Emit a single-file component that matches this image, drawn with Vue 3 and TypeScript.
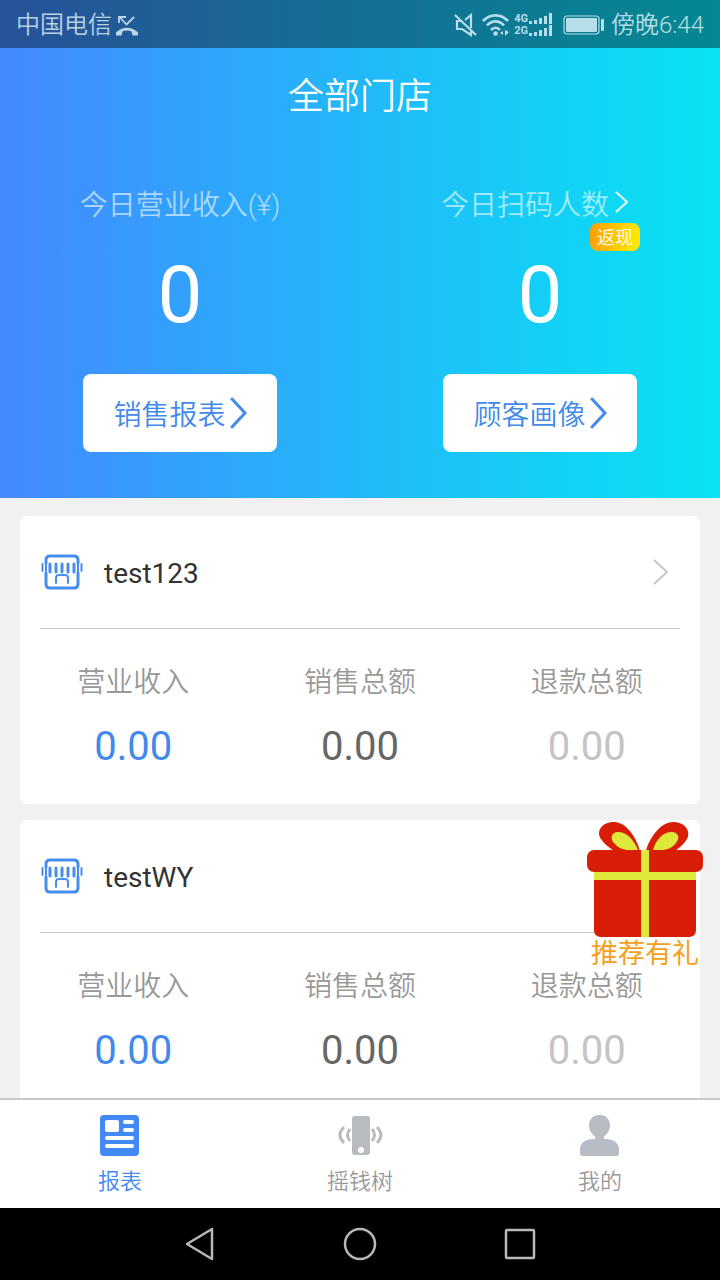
<script setup lang="ts">
interface Store {
  name: string
  income: string
  sales: string
  refund: string
}

const stores: Store[] = [
  { name: 'test123', income: '0.00', sales: '0.00', refund: '0.00' },
  { name: 'testWY', income: '0.00', sales: '0.00', refund: '0.00' },
]
</script>

<template>
  <div class="screen">
    <header class="hero">
      <div class="status">
        <div class="status-group">
          <span>中国电信</span>
          <svg class="missed" width="24" height="24" viewBox="0 0 24 24" aria-hidden="true">
            <path d="M4 10V4h7M5 4.500l6.500 7L19 4" fill="none" stroke="currentColor" stroke-width="1.800" />
            <path d="M1 19.500c6-6.500 16-6.500 22 0v3h-5.500l-1-4c-2.500-1.200-6.500-1.200-9 0l-1 4H1z" fill="currentColor" />
          </svg>
        </div>
        <div class="status-group right">
          <svg width="24" height="24" viewBox="0 0 24 24" aria-hidden="true">
            <path d="M8 8H3v8h5l9 6v-4M11 7l6-5v13M1 2l21 20" fill="none" stroke="currentColor" stroke-width="2.200" />
          </svg>
          <svg class="wifi" width="28" height="24" viewBox="0 0 28 24" aria-hidden="true">
            <path d="M1 8C8 .500 19 .500 26 8M5 12.500c5-5.500 12-5.500 17 0M9 17c2.800-3 6.500-3 9 0" fill="none" stroke="currentColor" stroke-width="2.600" />
            <circle cx="13.500" cy="20.500" r="2.300" fill="currentColor" />
            <path d="M23 17v6l4-4zM21 18v4l-3-2z" fill="currentColor" />
          </svg>
          <span class="net"><span>4G</span><span>2G</span></span>
          <svg class="bars" width="24" height="24" viewBox="0 0 24 24" aria-hidden="true">
            <path
              d="M0 8h3v3H0zM5 7h3v4H5zM10 5h3v6h-3zM15 3h3v8h-3zM20 0h3v11h-3zM0 20h3v3H0zM5 19h3v4H5zM10 17h3v6h-3zM15 15h3v8h-3zM20 12h3v11h-3z"
              fill="currentColor"
            />
          </svg>
          <svg class="battery" width="42" height="20" viewBox="0 0 42 20" aria-hidden="true">
            <rect x="1" y="1" width="35" height="18" rx="3" fill="none" stroke="currentColor" stroke-width="1.200" />
            <rect x="3" y="3" width="31" height="14" rx="1" fill="currentColor" />
            <rect x="38" y="4" width="3" height="12" rx="1" fill="currentColor" />
          </svg>
          <span>傍晚6:44</span>
        </div>
      </div>

      <h1 class="title">全部门店</h1>

      <div class="summary">
        <section class="stat">
          <div class="stat-label"><span class="label-text">今日营业收入(¥)</span></div>
          <strong class="stat-value">0</strong>
          <button type="button" class="action">
            <span class="action-text">销售报表</span>
            <svg width="17" height="32" viewBox="0 0 17 32" aria-hidden="true">
              <path d="M2 2l13 14L2 30" />
            </svg>
          </button>
        </section>
        <section class="stat">
          <a href="#" class="stat-label link">
            <span class="label-text">今日扫码人数</span>
            <svg width="14" height="22" viewBox="0 0 14 22" aria-hidden="true">
              <path d="M1 1l11 10L1 21" />
            </svg>
            <span class="badge">返现</span>
          </a>
          <strong class="stat-value">0</strong>
          <button type="button" class="action">
            <span class="action-text">顾客画像</span>
            <svg width="17" height="32" viewBox="0 0 17 32" aria-hidden="true">
              <path d="M2 2l13 14L2 30" />
            </svg>
          </button>
        </section>
      </div>
    </header>

    <main class="stores">
      <article v-for="store in stores" :key="store.name" class="card">
        <button type="button" class="card-head">
          <svg class="shop" width="42" height="36" viewBox="0 0 42 36" aria-hidden="true">
            <path d="M5 9V6q0-4 4-4h24q4 0 4 4v3M5 19v11q0 4 4 4h24q4 0 4-4V19" stroke-width="3" />
            <path d="M1.500 10v7M40.500 10v7M5 9v10M37 9v10" stroke-width="2" />
            <path d="M9 10v8M15 10v8M21 10v8M27 10v8M33 10v8" stroke-width="3" />
            <path d="M15 29v-5q0-3 3-3h6q3 0 3 3v5" stroke-width="2" />
          </svg>
          <span class="name">{{ store.name }}</span>
          <svg class="arrow" width="16" height="26" viewBox="0 0 16 26" aria-hidden="true">
            <path d="M1 1l13 12L1 25" />
          </svg>
        </button>
        <dl class="metrics">
          <div class="metric">
            <dt>营业收入</dt>
            <dd class="income">{{ store.income }}</dd>
          </div>
          <div class="metric">
            <dt>销售总额</dt>
            <dd>{{ store.sales }}</dd>
          </div>
          <div class="metric">
            <dt>退款总额</dt>
            <dd class="refund">{{ store.refund }}</dd>
          </div>
        </dl>
      </article>

      <a href="#" class="gift">
        <svg width="116" height="116" viewBox="0 0 116 116" aria-hidden="true">
          <path d="M53 29C50 17 40 0 27 0 14 0 9 10 14 17c3 5 8 8 13 12z" fill="#d81e06" />
          <path d="M59 29C62 17 73 0 86 0c13 0 18 10 14 17-3 5-7 8-12 12z" fill="#d81e06" />
          <path d="M51 28C47 18 40 10 31 10c-7 0-8 7-4 11 4 5 10 7 14 7z" fill="#dde83a" />
          <path d="M66 28C68 20 75 10 84 10c8 0 9 6 5 11-4 5-9 7-14 7z" fill="#dde83a" />
          <rect x="0" y="28" width="116" height="22" rx="7" fill="#d81e06" />
          <path d="M7 50h102v58q0 7-7 7H14q-7 0-7-7z" fill="#d81e06" />
          <path d="M7 50h102v8H7zM54 28h8v87h-8z" fill="#dde83a" />
        </svg>
        <span class="gift-text">推荐有礼</span>
      </a>
    </main>

    <nav class="tabs">
      <a href="#" class="tab active" aria-current="page">
        <svg width="42" height="42" viewBox="0 0 42 42" aria-hidden="true">
          <rect x="1" y="0" width="39" height="41" rx="4" fill="currentColor" />
          <rect x="6" y="5" width="14" height="12" rx="2" fill="#fff" />
          <path d="M26 7h7M26 15h7M8 23h25M8 31h25" stroke="#fff" stroke-width="4" stroke-linecap="round" />
        </svg>
        <span>报表</span>
      </a>
      <a href="#" class="tab">
        <svg width="46" height="42" viewBox="0 0 46 42" aria-hidden="true">
          <path d="M18 1h12q3 0 3 3v33q0 3-3 3H18q-3 0-3-3V4q0-3 3-3zm6 31a3 3 0 1 0 0 6 3 3 0 0 0 0-6z" fill="#b8bcc1" fill-rule="evenodd" />
          <path d="M7 12q-8 8 0 16M13 14q-5 6 0 12M35 14q5 6 0 12M40 12q8 8 0 16" fill="none" stroke="#b8bcc1" stroke-width="3" />
        </svg>
        <span>摇钱树</span>
      </a>
      <a href="#" class="tab">
        <svg width="42" height="42" viewBox="0 0 42 42" aria-hidden="true">
          <path d="M20.500 0c7 0 10.500 5 10.500 10.500 0 5-3 8.500-6 11-1 2 0 2.500 2 2.500 8 0 13 4 13 11v3q0 3-3 3H4q-3 0-3-3v-3c0-7 5-11 13-11 2 0 3-.500 2-2.500-3-2.500-6-6-6-11C10 5 13.500 0 20.500 0z" fill="#b8bcc3" />
        </svg>
        <span>我的</span>
      </a>
    </nav>

    <div class="system">
      <button type="button" aria-label="返回">
        <svg width="34" height="36" viewBox="0 0 34 36" aria-hidden="true">
          <path d="M29 3v30L4 18z" />
        </svg>
      </button>
      <button type="button" aria-label="主屏幕">
        <svg width="34" height="36" viewBox="0 0 34 36" aria-hidden="true">
          <circle cx="17" cy="18" r="15" />
        </svg>
      </button>
      <button type="button" aria-label="最近任务">
        <svg width="34" height="36" viewBox="0 0 34 36" aria-hidden="true">
          <rect x="3" y="4" width="28" height="28" rx="1" />
        </svg>
      </button>
    </div>
  </div>
</template>

<style>
body {
  margin: 0;
}
</style>

<style scoped>
.screen {
  display: flex;
  flex-direction: column;
  height: 100vh;
  overflow: hidden;
  background: #f1f1f1;
  font-family: Roboto, "Noto Sans CJK SC", sans-serif;
  font-weight: 350;
}

.screen * {
  box-sizing: border-box;
}

svg {
  display: block;
  flex: none;
}

button {
  margin: 0;
  padding: 0;
  border: 0;
  background: none;
  font: inherit;
  cursor: pointer;
}

a {
  color: inherit;
  text-decoration: none;
}

.hero {
  flex: none;
  padding-bottom: 46px;
  background: linear-gradient(90deg, #4488ff 0%, #2da8fa 33%, #18c8f7 67%, #08e3f2 100%);
  color: #fff;
}

.status {
  display: flex;
  align-items: center;
  justify-content: space-between;
  height: 48px;
  padding: 2px 16px 0;
  background: rgba(0, 0, 0, 0.4);
  color: rgba(225, 246, 255, 0.8);
  font-size: 24px;
  line-height: 46px;
}

.status-group {
  display: flex;
  align-items: center;
}

.missed {
  margin-left: 3px;
}

.wifi {
  margin-left: 4px;
}

.net {
  display: flex;
  flex-direction: column;
  margin-left: 4px;
  font-size: 11px;
  font-weight: 700;
  line-height: 12px;
}

.bars {
  margin-left: 1px;
}

.battery {
  margin: 0 6px 0 10px;
}

.title {
  margin: 0;
  padding: 21px 0 19px;
  font-size: 36px;
  font-weight: 350;
  line-height: 56px;
  text-align: center;
}

.summary {
  display: grid;
  grid-template-columns: 1fr 1fr;
  padding-top: 38px;
}

.stat {
  display: flex;
  flex-direction: column;
  align-items: center;
}

.stat-label {
  display: flex;
  align-items: center;
  height: 40px;
  color: rgba(255, 255, 255, 0.6);
  font-size: 28px;
}

.label-text {
  padding-top: 8px;
  line-height: 32px;
}

.link {
  position: relative;
  gap: 6px;
  padding-right: 10px;
}

.link path {
  fill: none;
  stroke: #e4fbff;
  stroke-width: 2;
}

.badge {
  position: absolute;
  top: 41px;
  right: -1px;
  width: 50px;
  padding-top: 2px;
  border-radius: 8px;
  background: linear-gradient(100deg, #ff9c00, #ffe400 85%);
  color: #fff;
  font-size: 18px;
  line-height: 26px;
  text-align: center;
}

.stat-value {
  padding: 23px 0 29px;
  font-size: 80px;
  font-weight: 400;
  line-height: 100px;
}

.action {
  display: flex;
  align-items: center;
  gap: 4px;
  padding: 18px 30px;
  border-radius: 8px;
  background: #fff;
  color: #4289ec;
  font-size: 28px;
}

.action-text {
  padding-top: 6px;
  line-height: 36px;
}

.action path {
  fill: none;
  stroke: currentColor;
  stroke-width: 3;
  stroke-linecap: round;
}

.stores {
  position: relative;
  display: flex;
  flex: 1;
  flex-direction: column;
  gap: 16px;
  min-height: 0;
  padding: 18px 20px 0;
  overflow: hidden;
}

.card {
  flex: none;
  padding: 0 20px 32px;
  border-radius: 6px;
  background: #fff;
}

.card-head {
  display: flex;
  align-items: center;
  width: 100%;
  height: 113px;
  padding-right: 11px;
  padding-left: 1px;
  border-bottom: 1px solid #c8c8c8;
  color: #333;
  text-align: left;
}

.shop path {
  fill: none;
  stroke: #468eed;
  stroke-linecap: round;
}

.name {
  flex: 1;
  margin-left: 21px;
  padding-top: 4px;
  font-size: 28px;
  font-weight: 400;
  line-height: 36px;
}

.arrow path {
  fill: none;
  stroke: #c8c8c8;
  stroke-width: 2;
}

.metrics {
  display: grid;
  grid-template-columns: repeat(3, 1fr);
  margin: 0 -20px;
  padding-top: 34px;
}

.metric {
  text-align: center;
}

.metric dt {
  color: #999;
  font-size: 28px;
  line-height: 40px;
}

.metric dd {
  margin: 0;
  padding-top: 19px;
  color: #666;
  font-size: 40px;
  font-weight: 400;
  line-height: 50px;
}

.metric .income {
  color: #4289ec;
}

.metric .refund {
  color: #c4c4c4;
}

.gift {
  position: absolute;
  top: 324px;
  right: 17px;
  color: #f5a01c;
  font-size: 27px;
  font-weight: 400;
  line-height: 32px;
  text-align: center;
}

.gift-text {
  display: block;
}

.tabs {
  display: grid;
  flex: none;
  grid-template-columns: repeat(3, 1fr);
  height: 110px;
  border-top: 2px solid #c8c8c8;
  background: #fff;
}

.tab {
  display: flex;
  flex-direction: column;
  align-items: center;
  gap: 9px;
  padding-top: 15px;
  color: #999;
  font-size: 22px;
  line-height: 32px;
}

.active {
  color: #4289f4;
}

.system {
  display: flex;
  flex: none;
  align-items: center;
  justify-content: center;
  gap: 126px;
  height: 72px;
  background: #000;
}

.system svg {
  fill: none;
  stroke: #b8b8b8;
  stroke-width: 2.5;
  stroke-linejoin: round;
}
</style>
